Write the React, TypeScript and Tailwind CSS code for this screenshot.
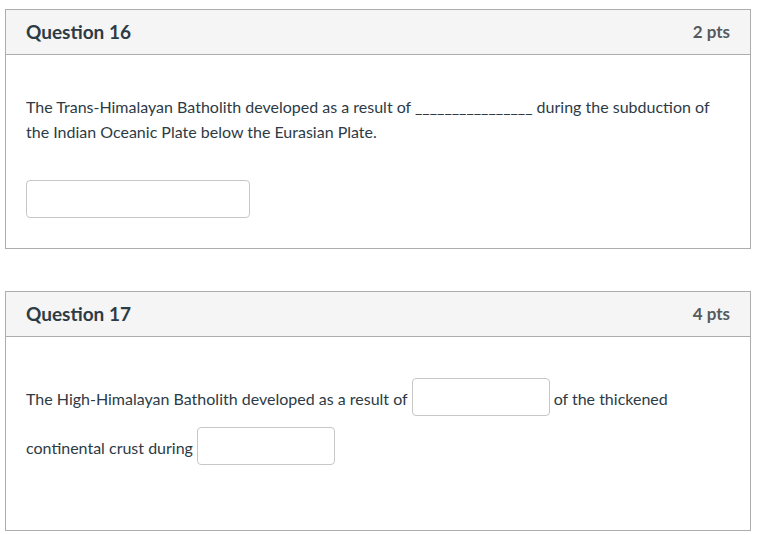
import React from "react";

const font = { fontFamily: "Lato, 'Noto Sans', sans-serif" };

function Card({ n, pts, children, bodyClass }: { n: string; pts: string; children: React.ReactNode; bodyClass: string }) {
  return (
    <div className="border border-[#adadad] bg-white">
      <div className="flex h-[45px] items-center justify-between border-b border-[#adadad] bg-[#f5f5f5] pl-5 pr-5">
        <span className="text-[19px] font-bold text-[#2d3b45]">Question {n}</span>
        <span className="text-[17px] font-bold text-[#555a5f]">{pts}</span>
      </div>
      <div className={bodyClass}>{children}</div>
    </div>
  );
}

export default function App() {
  return (
    <div className="min-h-[535px] w-[760px] bg-white pl-[5px] pr-[9px] pt-[9px]" style={font}>
      <Card n="16" pts="2 pts" bodyClass="px-5 pt-[39px] pb-[30px] text-[16px] leading-[25px] text-[#2d3b45]">
        <p>
          The Trans-Himalayan Batholith developed as a result of ________________ during the subduction of the Indian Oceanic Plate below the Eurasian Plate.
        </p>
        <input className="mt-[36px] block h-[38px] w-[224px] rounded-[4px] border border-[#c7c7c7] bg-white" />
      </Card>
      <div className="h-[42px]" />
      <Card n="17" pts="4 pts" bodyClass="px-5 pt-[38px] pb-[57px] text-[16px] leading-[48px] text-[#2d3b45]">
        <p>
          The High-Himalayan Batholith developed as a result of{" "}
          <input className="mb-[8px] inline-block h-[38px] w-[138px] rounded-[4px] border border-[#c7c7c7] bg-white align-middle" />{" "}
          of the thickened continental crust during{" "}
          <input className="mb-[8px] inline-block h-[38px] w-[138px] rounded-[4px] border border-[#c7c7c7] bg-white align-middle" />
        </p>
      </Card>
    </div>
  );
}
